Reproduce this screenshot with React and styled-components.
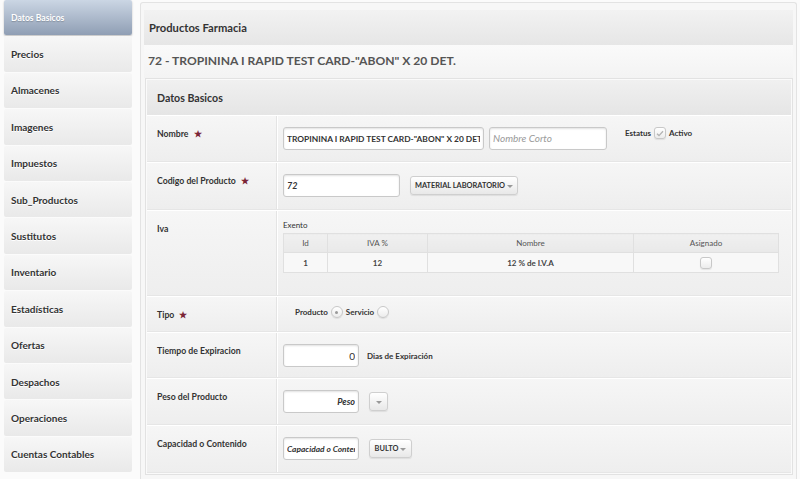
import React from "react";
import styled, { createGlobalStyle } from "styled-components";

const GlobalStyle = createGlobalStyle`
    body {
        margin: 0;
        background: #fbfbfb;
        font-family: Lato, "Open Sans", Arial, sans-serif;
        color: #333;
    }
`

const StyledPage = styled.div`
    display: grid;
    grid-template-columns: 128px 1fr;
    column-gap: 8px;
    padding: 0 3px 0 4px;
    height: 479px;
    overflow: hidden;
`

const StyledSidebar = styled.nav`
    display: flex;
    flex-direction: column;
    gap: 1px;
    padding-top: 0;
`

const StyledSideItem = styled.div`
    height: 35.4px;
    display: flex;
    align-items: center;
    padding-left: 7px;
    border-radius: 2px;
    font-weight: 700;
    font-size: ${p => p.$active ? '8.6px' : '10px'};
    color: ${p => p.$active ? '#fff' : '#333'};
    background: ${p => p.$active
        ? 'linear-gradient(#cbd6e4, #8f9eb4)'
        : 'linear-gradient(#f7f7f7, #e9e9e9)'};
    box-shadow: ${p => p.$active ? '0 1px 2px rgba(0,0,0,0.25)' : 'none'};
    text-shadow: ${p => p.$active ? '0 1px 1px rgba(0,0,0,0.2)' : '0 1px 0 #fff'};
`

const StyledMain = styled.main`
    margin-top: 2px;
    border: 1px solid #e3e3e3;
    border-bottom: none;
    border-radius: 3px 3px 0 0;
    background: #f7f7f7;
    padding: 7px 3px 0 3px;
`

const StyledPanelHeader = styled.div`
    height: 35px;
    display: flex;
    align-items: center;
    padding-left: 5px;
    background: linear-gradient(#f2f2f2, #e6e6e6);
    font-size: 11.2px;
    font-weight: 700;
    color: #333;
`

const StyledTitle = styled.h1`
    margin: 0;
    box-sizing: border-box;
    height: 33px;
    display: flex;
    align-items: center;
    padding: 0 0 3px 4px;
    font-size: 12.1px;
    font-weight: 700;
    color: #555;
    background: linear-gradient(#fafafa, #f3f3f3);
`

const StyledCard = styled.section`
    margin: 0 0 0 1px;
    border: 1px solid #e2e2e2;
    padding: 1px;
    background: #fafafa;
`

const StyledCardHeader = styled.div`
    height: 35px;
    display: flex;
    align-items: center;
    padding-left: 10px;
    background: linear-gradient(#f0f0f0, #e5e5e5);
    font-size: 10.6px;
    font-weight: 700;
`

const StyledRow = styled.div`
    display: grid;
    grid-template-columns: 130px 1fr;
    height: ${p => p.$h}px;
    box-sizing: border-box;
    border-top: 1px solid #fff;
    border-bottom: 1px solid #e6e6e6;
    background: linear-gradient(#f6f6f6, #eeeeee);
`

const StyledLabel = styled.div`
    padding: 12px 0 0 10px;
    font-size: 8.7px;
    font-weight: 700;
    color: #333;
    border-right: 1px solid #e4e4e4;
    box-shadow: 1px 0 0 #fff;
`

const StyledStar = styled.span`
    color: #7b2536;
    font-size: 9px;
    margin-left: 5px;
`

const StyledValue = styled.div`
    display: flex;
    align-items: ${p => p.$align || 'center'};
    flex-wrap: wrap;
    align-content: flex-start;
    gap: ${p => p.$gap ?? 8}px;
    padding: ${p => p.$pad || '11px 7px 0 6px'};
`

const StyledInput = styled.input`
    box-sizing: border-box;
    width: ${p => p.$w}px;
    height: 23px;
    padding: 0 3px;
    border: 1px solid #c9c9c9;
    border-radius: 3px;
    background: #fff;
    box-shadow: inset 0 1px 2px rgba(0,0,0,0.12);
    font-family: Lato, Arial, sans-serif;
    font-size: ${p => p.$size || 9}px;
    font-weight: ${p => p.$bold ? 700 : 400};
    font-style: ${p => p.$italic ? 'italic' : 'normal'};
    font-synthesis: style;
    text-align: ${p => p.$right ? 'right' : 'left'};
    color: #333;
    outline: none;
    &::placeholder {
        color: #999;
        font-style: italic;
        font-size: 10px;
    }
`

const StyledButton = styled.button`
    box-sizing: border-box;
    height: 19px;
    width: ${p => p.$w}px;
    padding: 0;
    display: flex;
    align-items: center;
    justify-content: center;
    gap: 2px;
    border: 1px solid #cfcfcf;
    border-radius: 3px;
    background: linear-gradient(#ffffff, #e8e8e8);
    box-shadow: 0 1px 1px rgba(0,0,0,0.08);
    font-family: Lato, Arial, sans-serif;
    font-size: 7.4px;
    font-weight: 700;
    color: #333;
`

const StyledCaret = styled.span`
    width: 0;
    height: 0;
    border-left: 3.5px solid transparent;
    border-right: 3.5px solid transparent;
    border-top: 3.5px solid #999;
    margin-top: 1px;
`

const StyledSmallText = styled.span`
    font-size: 8px;
    font-weight: ${p => p.$light ? 400 : 700};
    color: #333;
`

const StyledCheck = styled.span`
    box-sizing: border-box;
    width: 12px;
    height: 12px;
    display: inline-flex;
    align-items: center;
    justify-content: center;
    vertical-align: middle;
    border: 1px solid #c8c8c8;
    border-radius: 3px;
    background: linear-gradient(#ffffff, #ececec);
    box-shadow: 0 1px 1px rgba(0,0,0,0.08);
`

const StyledRadio = styled(StyledCheck)`
    border-radius: 50%;
    &::after {
        content: '';
        width: ${p => p.$on ? 3 : 0}px;
        height: ${p => p.$on ? 3 : 0}px;
        border-radius: 50%;
        background: #999;
    }
`

const StyledStatus = styled.div`
    display: flex;
    align-items: center;
    gap: 3px;
    margin-left: 13px;
`

const StyledTable = styled.table`
    width: 496px;
    border-collapse: collapse;
    font-size: 8px;
    color: #444;
    margin-top: 3px;
    th, td {
        border: 1px solid #e0e0e0;
        text-align: center;
        padding: 0;
        height: 18px;
    }
    th {
        font-weight: 400;
        background: linear-gradient(#f0f0f0, #e9e9e9);
        color: #555;
    }
    td {
        font-weight: 700;
        background: #f8f8f8;
        height: 19px;
    }
`

const Check = () => (
    <StyledCheck>
        <svg width="8" height="7" viewBox="0 0 8 7">
            <path d="M1 3.8 L3 5.6 L7 1.2" fill="none" stroke="#b3b3b3" strokeWidth="1.3" />
        </svg>
    </StyledCheck>
)

const Label = ({ children, required }) => (
    <StyledLabel>
        {children}
        {required && <StyledStar>★</StyledStar>}
    </StyledLabel>
)

const sideItems = [
    'Datos Basicos', 'Precios', 'Almacenes', 'Imagenes', 'Impuestos', 'Sub_Productos',
    'Sustitutos', 'Inventario', 'Estadísticas', 'Ofertas', 'Despachos', 'Operaciones',
    'Cuentas Contables'
]

const App = () => {
    return (
        <>
            <GlobalStyle />
            <StyledPage>
                <StyledSidebar>
                    {sideItems.map((item, i) => (
                        <StyledSideItem key={item} $active={i === 0}>{item}</StyledSideItem>
                    ))}
                </StyledSidebar>

                <StyledMain>
                    <StyledPanelHeader>Productos Farmacia</StyledPanelHeader>
                    <StyledTitle>72 - TROPININA I RAPID TEST CARD-"ABON" X 20 DET.</StyledTitle>

                    <StyledCard>
                        <StyledCardHeader>Datos Basicos</StyledCardHeader>

                        <StyledRow $h={47}>
                            <Label required>Nombre</Label>
                            <StyledValue $align="flex-start" $gap={5}>
                                <StyledInput $w={201} $bold $size={8.4} readOnly
                                    defaultValue={'TROPININA I RAPID TEST CARD-"ABON" X 20 DET.'} />
                                <StyledInput $w={118} placeholder="Nombre Corto" readOnly />
                                <StyledStatus>
                                    <StyledSmallText>Estatus</StyledSmallText>
                                    <Check />
                                    <StyledSmallText>Activo</StyledSmallText>
                                </StyledStatus>
                            </StyledValue>
                        </StyledRow>

                        <StyledRow $h={48}>
                            <Label required>Codigo del Producto</Label>
                            <StyledValue $gap={10}>
                                <StyledInput $w={117} $italic $bold readOnly defaultValue="72" />
                                <StyledButton $w={108}>MATERIAL LABORATORIO <StyledCaret /></StyledButton>
                            </StyledValue>
                        </StyledRow>

                        <StyledRow $h={86}>
                            <Label>Iva</Label>
                            <StyledValue $align="flex-start" $pad="9px 7px 0 6px" $gap={0}>
                                <StyledSmallText $light>Exento</StyledSmallText>
                                <StyledTable>
                                    <thead>
                                        <tr>
                                            <th style={{ width: 43 }}>Id</th>
                                            <th style={{ width: 99 }}>IVA %</th>
                                            <th style={{ width: 205 }}>Nombre</th>
                                            <th>Asignado</th>
                                        </tr>
                                    </thead>
                                    <tbody>
                                        <tr>
                                            <td>1</td>
                                            <td>12</td>
                                            <td>12 % de I.V.A</td>
                                            <td><StyledCheck /></td>
                                        </tr>
                                    </tbody>
                                </StyledTable>
                            </StyledValue>
                        </StyledRow>

                        <StyledRow $h={36}>
                            <Label required>Tipo</Label>
                            <StyledValue $pad="9px 7px 0 18px" $gap={3}>
                                <StyledSmallText>Producto</StyledSmallText>
                                <StyledRadio $on />
                                <StyledSmallText>Servicio</StyledSmallText>
                                <StyledRadio />
                            </StyledValue>
                        </StyledRow>

                        <StyledRow $h={46}>
                            <Label>Tiempo de Expiracion</Label>
                            <StyledValue>
                                <StyledInput $w={76} $right $size={10} readOnly defaultValue="0" />
                                <StyledSmallText>Dias de Expiración</StyledSmallText>
                            </StyledValue>
                        </StyledRow>

                        <StyledRow $h={47}>
                            <Label>Peso del Producto</Label>
                            <StyledValue $gap={10}>
                                <StyledInput $w={76} $right $italic $bold readOnly defaultValue="Peso" />
                                <StyledButton $w={19}><StyledCaret /></StyledButton>
                            </StyledValue>
                        </StyledRow>

                        <StyledRow $h={48}>
                            <Label>Capacidad o Contenido</Label>
                            <StyledValue $gap={10}>
                                <StyledInput $w={76} $italic $bold $size={8.4} readOnly defaultValue="Capacidad o Contenido" />
                                <StyledButton $w={43}>BULTO <StyledCaret /></StyledButton>
                            </StyledValue>
                        </StyledRow>
                    </StyledCard>
                </StyledMain>
            </StyledPage>
        </>
    )
}

export default App;
